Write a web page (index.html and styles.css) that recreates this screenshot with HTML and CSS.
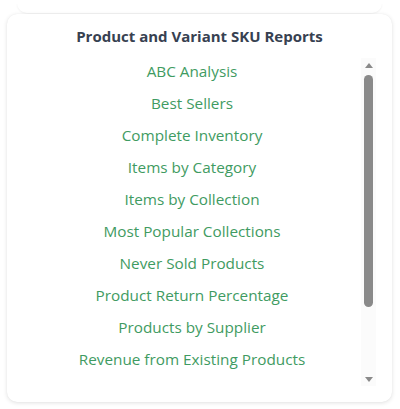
FILE: index.html
```html
<!DOCTYPE html>
<html lang="en">
<head>
<meta charset="utf-8">
<title>Product and Variant SKU Reports</title>
<link rel="stylesheet" href="styles.css">
</head>
<body>
<div class="page">
  <div class="prev-card"></div>
  <section class="card">
    <h2 class="card-title">Product and Variant SKU Reports</h2>
    <div class="scroll-area">
      <div class="report-list">
        <a class="report-link" href="#">ABC Analysis</a>
        <a class="report-link" href="#">Best Sellers</a>
        <a class="report-link" href="#">Complete Inventory</a>
        <a class="report-link" href="#">Items by Category</a>
        <a class="report-link" href="#">Items by Collection</a>
        <a class="report-link" href="#">Most Popular Collections</a>
        <a class="report-link" href="#">Never Sold Products</a>
        <a class="report-link" href="#">Product Return Percentage</a>
        <a class="report-link" href="#">Products by Supplier</a>
        <a class="report-link" href="#">Revenue from Existing Products</a>
        <a class="report-link" href="#">Sales by Variant (Active SKUs)</a>
        <a class="report-link" href="#">Slow Moving Products</a>
        <a class="report-link" href="#">Variant Sales Summary</a>
      </div>
      <div class="scrollbar" aria-hidden="true">
        <div class="sb-arrow sb-up"></div>
        <div class="sb-track">
          <div class="sb-thumb"></div>
        </div>
        <div class="sb-arrow sb-down"></div>
      </div>
    </div>
  </section>
</div>
</body>
</html>
```

FILE: styles.css
```css
html, body {
  margin: 0;
  padding: 0;
  background: #ffffff;
}

body {
  font-family: "Open Sans", "Noto Sans", sans-serif;
  width: 400px;
  height: 409px;
  overflow: hidden;
}

.page {
  padding: 14px 8px 0 7px;
}

.prev-card {
  height: 10px;
  margin: -11px 10px 1px 10px;
  border-radius: 0 0 10px 10px;
  box-shadow: 0 1px 2px rgba(0, 0, 0, 0.06);
}

.card {
  background: #ffffff;
  border-radius: 10px;
  box-shadow: 0 1px 4px rgba(0, 0, 0, 0.12), 0 0 1px rgba(0, 0, 0, 0.06);
  height: 388px;
  box-sizing: border-box;
  padding: 10px 16px 16px 16px;
  display: flex;
  flex-direction: column;
}

.card-title {
  margin: 0 0 10px 0;
  font-size: 15px;
  line-height: 24px;
  font-weight: 700;
  color: #374151;
  text-align: center;
}

.scroll-area {
  flex: 1;
  min-height: 0;
  display: flex;
}

.report-list {
  flex: 1;
  min-width: 0;
  overflow-y: auto;
  scrollbar-width: none;
  display: flex;
  flex-direction: column;
  align-items: center;
  gap: 8px;
  padding: 1px 0 11px 0;
}

.report-link {
  flex: none;
  font-size: 15.3px;
  line-height: 24px;
  color: #3f9b62;
  text-decoration: none;
  white-space: nowrap;
}

.scrollbar {
  width: 15px;
  flex: none;
  display: flex;
  flex-direction: column;
  background: #fbfbfb;
}

.sb-arrow {
  height: 15px;
  flex: none;
  display: flex;
  align-items: center;
  justify-content: center;
}

.sb-arrow::before {
  content: "";
  width: 0;
  height: 0;
  border-left: 4.5px solid transparent;
  border-right: 4.5px solid transparent;
}

.sb-up::before {
  border-bottom: 5px solid #8a8a8a;
  margin-bottom: 1px;
}

.sb-down::before {
  border-top: 5px solid #8a8a8a;
  margin-top: 1px;
}

.sb-track {
  flex: 1;
  padding: 2px 3px 0 3px;
}

.sb-thumb {
  height: 232px;
  border-radius: 5px;
  background: #8a8a8a;
}
```
